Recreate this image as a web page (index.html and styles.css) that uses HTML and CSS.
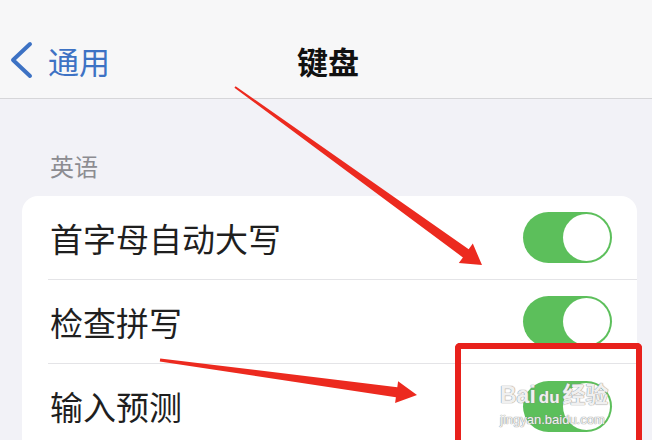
FILE: index.html
```html
<!DOCTYPE html>
<html lang="zh">
<head>
  <meta charset="UTF-8" />
  <title>键盘</title>
  <link rel="stylesheet" href="styles.css">
</head>
<body>

  <div class="nav">
    <div class="back">
      <svg class="chevron" width="24" height="38" viewBox="0 0 24 38">
        <polyline points="21,3 4,19 21,35" fill="none" stroke="#3d72c4" stroke-width="4" stroke-linecap="round" stroke-linejoin="round"/>
      </svg>
      <span>通用</span>
    </div>
    <div class="title">键盘</div>
    <div></div>
  </div>

  <div class="section">
    <div class="header">英语</div>
    <div class="card">
      <div class="row">
        <span class="label">首字母自动大写</span>
        <span class="toggle"><span class="knob"></span></span>
      </div>
      <div class="row">
        <span class="label">检查拼写</span>
        <span class="toggle"><span class="knob"></span></span>
      </div>
      <div class="row last">
        <span class="label">输入预测</span>
        <span class="toggle"><span class="knob"></span></span>
      </div>
    </div>
  </div>

  <!-- marcas rojas encima de la captura -->
  <svg class="arrows" width="652" height="440" viewBox="0 0 652 440">
    <polygon fill="#ec2a1f" points="234.4,87.8 462.9,257.4 458.8,263 482,265 472.8,243.6 468.7,249.2 235.6,86.2"/>
    <polygon fill="#ec2a1f" points="159.8,361.5 395.9,397.2 395.1,403.1 417,395 398.1,381.3 397.3,387.2 160.2,358.5"/>
  </svg>
  <div class="highlight"></div>

  <div class="watermark">
    <div class="brand">Bai<span class="paw">du</span>经验</div>
    <div class="site">jingyan.baidu.com</div>
  </div>

</body>
</html>
```

FILE: styles.css
```css
body {
  margin: 0;
  width: 652px;
  height: 440px;
  overflow: hidden;
  position: relative;
  background-color: #f2f2f7;
  font-family: "Noto Sans CJK SC", "Noto Sans", sans-serif;
  color: #1d1d1f;
}

.nav {
  height: 76px;
  padding-top: 22px;
  background-color: #f7f7f8;
  border-bottom: 1px solid #d6d6d9;
  display: grid;
  grid-template-columns: 1fr auto 1fr;
  align-items: center;
}

.back {
  display: flex;
  align-items: center;
  gap: 15px;
  padding-left: 9px;
  color: #3d72c4;
  font-size: 31px;
}

.title {
  font-size: 31px;
  font-weight: bold;
  color: #111;
  padding-left: 4px;
}

.section {
  padding: 52px 15px 0 22px;
}

.header {
  padding-left: 28px;
  font-size: 24px;
  line-height: 30px;
  color: #8c8c91;
  margin-bottom: 15px;
}

.card {
  background-color: #fff;
  border-radius: 16px 16px 0 0;
  padding-left: 26px;
}

.row {
  height: 83px;
  display: flex;
  align-items: center;
  justify-content: space-between;
  padding-right: 25px;
  border-bottom: 1px solid #e4e4e7;
}

/* la captura corta la última fila */
.row.last {
  height: 76px;
  align-items: flex-start;
  padding-top: 17px;
  box-sizing: border-box;
  border-bottom: none;
}

.label {
  padding-left: 2px;
  font-size: 33px;
  line-height: 40px;
  color: #1f1f1f;
}

.row.last .label {
  margin-top: 5px;
}

.toggle {
  width: 89px;
  height: 51px;
  box-sizing: border-box;
  padding: 2px;
  border-radius: 26px;
  background-color: #5cbf5b;
  display: flex;
  justify-content: flex-end;
}

.knob {
  width: 47px;
  height: 47px;
  border-radius: 50%;
  background-color: #fff;
}

.arrows {
  position: absolute;
  top: 0;
  left: 0;
}

.highlight {
  position: absolute;
  left: 455px;
  top: 343px;
  width: 187px;
  height: 97px;
  box-sizing: border-box;
  border: 6px solid #e8211c;
  border-bottom: none;
  border-radius: 5px 5px 0 0;
}

.watermark {
  position: absolute;
  left: 500px;
  top: 381px;
  color: rgba(255, 255, 255, 0.9);
  text-shadow: 0 0 1px #8a8a8a, 0 0 1px #8a8a8a;
  font-family: "Liberation Sans", "Noto Sans CJK SC", sans-serif;
}

.brand {
  font-size: 23px;
  font-weight: bold;
  line-height: 28px;
}

.paw {
  font-size: 17px;
  margin: 0 3px;
}

.site {
  font-size: 13px;
  line-height: 16px;
}
```
